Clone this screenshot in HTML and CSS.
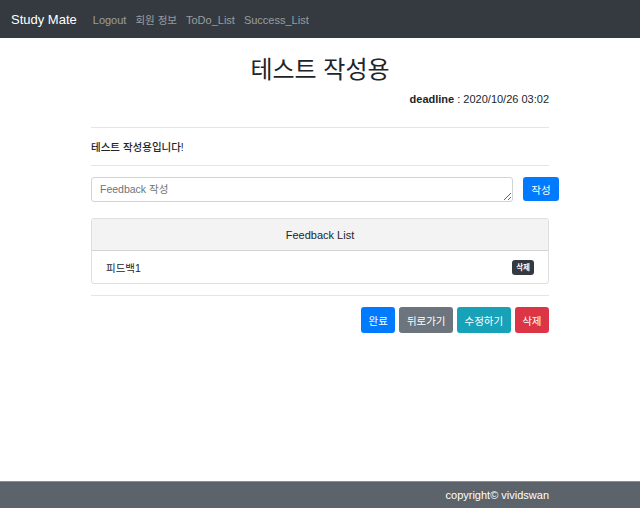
FILE: index.html
```html
<!DOCTYPE html>
<html lang="ko">
<head>
<meta charset="utf-8">
<title>Study Mate</title>
<link rel="stylesheet" href="styles.css">
</head>
<body>
<nav class="navbar">
  <a class="brand" href="#">Study Mate</a>
  <ul class="nav">
    <li><a href="#">Logout</a></li>
    <li><a href="#">회원 정보</a></li>
    <li><a href="#">ToDo_List</a></li>
    <li><a href="#">Success_List</a></li>
  </ul>
</nav>
<main class="container">
  <h1 class="title">테스트 작성용</h1>
  <p class="deadline"><b>deadline</b> : 2020/10/26 03:02</p>
  <hr class="rule">
  <p class="content">테스트 작성용입니다!</p>
  <hr class="rule">
  <div class="form-row">
    <textarea class="input" placeholder="Feedback 작성"></textarea>
    <button class="btn btn-primary btn-sm">작성</button>
  </div>
  <div class="card">
    <div class="card-header">Feedback List</div>
    <ul class="list">
      <li class="list-item"><span>피드백1</span><span class="badge">삭제</span></li>
    </ul>
  </div>
  <hr class="rule rule-bottom">
  <div class="actions">
    <button class="btn btn-primary">완료</button>
    <button class="btn btn-secondary">뒤로가기</button>
    <button class="btn btn-info">수정하기</button>
    <button class="btn btn-danger">삭제</button>
  </div>
</main>
<footer class="footer">
  <div class="footer-inner">copyright© vividswan</div>
</footer>
</body>
</html>
```
FILE: styles.css
```css
* { box-sizing: border-box; }
html, body { height: 100%; }
body {
  margin: 0;
  font-family: "Liberation Sans", "Noto Sans CJK KR", sans-serif;
  color: #212529;
  background: #fff;
  display: flex;
  flex-direction: column;
  min-height: 100vh;
}
.navbar {
  height: 38px;
  background: #343a40;
  display: flex;
  align-items: center;
  padding: 0 11px;
}
.brand {
  color: #fff;
  text-decoration: none;
  font-size: 13px;
  margin-right: 16px;
}
.nav {
  display: flex;
  gap: 9px;
  list-style: none;
  margin: 0;
  padding: 0;
}
.nav a {
  color: rgba(255,255,255,.5);
  text-decoration: none;
  font-size: 11px;
}
.nav li:nth-child(2) a { font-size: 10.5px; }
.container {
  width: 458px;
  margin: 0 auto;
  flex: 1;
}
.title {
  margin: 15px 0 0;
  font-weight: 400;
  font-size: 24px;
  line-height: 34px;
  text-align: center;
}
.deadline {
  margin: 4px 0 0;
  text-align: right;
  font-size: 11px;
  line-height: 16px;
}
.rule {
  border: 0;
  border-top: 1px solid rgba(0,0,0,.1);
  margin: 20px 0 0;
}
.content {
  margin: 0;
  padding: 11px 0 10px;
  font-size: 10.5px;
  line-height: 16px;
  font-weight: 500;
}
.content + .rule { margin-top: 0; }
.form-row {
  display: flex;
  gap: 10px;
  margin: 11px -10px 0 0;
  align-items: flex-start;
}
.input {
  flex: 1;
  height: 25px;
  border: 1px solid #ced4da;
  border-radius: 3px;
  padding: 4px 8px;
  font-family: inherit;
  font-size: 10.5px;
  line-height: 15px;
  color: #495057;
}
.input::placeholder { color: #6c757d; }
.btn {
  border: 1px solid transparent;
  border-radius: 3px;
  color: #fff;
  font-family: inherit;
  font-size: 10.5px;
  height: 26px;
  padding: 0 6.5px;
  cursor: pointer;
}
.btn-sm { height: 24px; width: 36px; padding: 0; }
.btn-primary { background: #007bff; }
.btn-secondary { background: #6c757d; }
.btn-info { background: #17a2b8; }
.btn-danger { background: #dc3545; }
.card {
  margin-top: 16px;
  border: 1px solid rgba(0,0,0,.125);
  border-radius: 3px;
  overflow: hidden;
}
.card-header {
  height: 32px;
  background: #f3f3f3;
  border-bottom: 1px solid rgba(0,0,0,.125);
  display: flex;
  align-items: center;
  justify-content: center;
  font-size: 11px;
}
.list { list-style: none; margin: 0; padding: 0; }
.list-item {
  height: 32px;
  display: flex;
  align-items: center;
  justify-content: space-between;
  padding: 0 14px;
  font-size: 10.5px;
}
.badge {
  background: #343a40;
  color: #fff;
  font-size: 7.5px;
  font-weight: 700;
  border-radius: 3px;
  padding: 3px 4px;
  line-height: 9px;
}
.rule-bottom { margin-top: 11px; }
.actions {
  display: flex;
  justify-content: flex-end;
  gap: 4px;
  margin-top: 11px;
}
.footer {
  height: 27px;
  background: #5c636a;
  border-top: 1px solid #878d93;
  display: flex;
  align-items: center;
}
.footer-inner {
  width: 458px;
  margin: 0 auto;
  text-align: right;
  color: #fff;
  font-size: 11px;
}
```
